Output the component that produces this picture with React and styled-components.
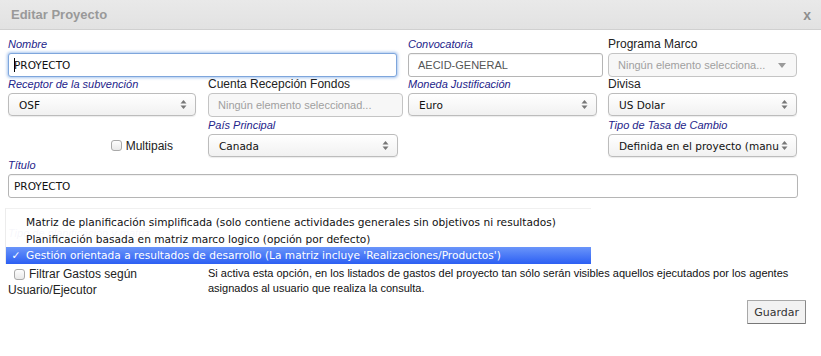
import React from 'react';
import styled, { createGlobalStyle } from 'styled-components';

const GlobalStyle = createGlobalStyle`
  html, body {
    margin: 0;
    padding: 0;
    background: #fff;
  }
  body {
    font-family: 'Liberation Sans', Arial, sans-serif;
    font-size: 12px;
    color: #222;
  }
`;

const Modal = styled.div`
  width: 821px;
  height: 356px;
  background: #fff;
  overflow: hidden;
`;

const Header = styled.div`
  height: 30px;
  display: flex;
  align-items: center;
  justify-content: space-between;
  padding: 0 10px 0 11px;
  box-sizing: border-box;
  background: linear-gradient(#e9e9e9, #e2e2e2);
  border-bottom: 1px solid #d0d0d0;
  h1 {
    margin: 0;
    font-size: 13px;
    font-weight: bold;
    color: #999;
  }
`;

const Close = styled.span`
  font-size: 14px;
  font-weight: bold;
  color: #8e8e8e;
`;

const Body = styled.div`
  padding: 7px 0 0 8px;
`;

const Grid = styled.div`
  display: grid;
  grid-template-columns: repeat(4, 190px);
  grid-template-rows: 40px 41px 40px 41px;
  column-gap: 10px;
`;

const Field = styled.div`
  display: flex;
  flex-direction: column;
  grid-column: ${(p) => p.span || 'auto'};
  position: relative;
`;

const Label = styled.label`
  display: block;
  height: 14px;
  line-height: 14px;
  margin-bottom: 2px;
  font-size: ${(p) => (p.required ? '11px' : '12px')};
  font-style: ${(p) => (p.required ? 'italic' : 'normal')};
  color: ${(p) => (p.required ? '#23238a' : '#222')};
  white-space: nowrap;
`;

const TextInput = styled.div`
  box-sizing: border-box;
  height: 24px;
  width: ${(p) => p.width || '100%'};
  display: flex;
  align-items: center;
  padding-left: 5px;
  border: 1px solid ${(p) => (p.focus ? '#7ea6dc' : '#b5b5b5')};
  border-radius: 3px;
  box-shadow: ${(p) =>
    p.focus ? '0 0 3px 1px rgba(96, 150, 222, 0.55)' : 'inset 0 1px 1px rgba(0,0,0,0.06)'};
  background: #fff;
  font-family: 'DejaVu Sans', Verdana, sans-serif;
  font-size: 10.5px;
  color: #111;
`;

const Caret = styled.span`
  display: inline-block;
  width: 1px;
  height: 14px;
  background: #000;
  margin-right: -1px;
`;

const PlainValue = styled.span`
  font-family: 'Liberation Sans', Arial, sans-serif;
  font-size: 11px;
  color: #555;
  padding-left: 4px;
`;

const Select = styled.div`
  box-sizing: border-box;
  height: 23px;
  width: ${(p) => p.width || '189px'};
  display: flex;
  align-items: center;
  justify-content: space-between;
  padding: 0 8px 0 10px;
  border: 1px solid #bcbcbc;
  border-radius: 4px;
  background: linear-gradient(#ffffff, #f1f1f1);
  box-shadow: 0 1px 1px rgba(0, 0, 0, 0.08);
  font-family: 'DejaVu Sans', Verdana, sans-serif;
  font-size: 10.5px;
  color: #111;
  white-space: nowrap;
  overflow: hidden;
`;

const Chosen = styled.div`
  box-sizing: border-box;
  height: 24px;
  width: ${(p) => p.width || '189px'};
  display: flex;
  align-items: center;
  justify-content: space-between;
  padding: 0 10px 0 9px;
  border: 1px solid #c4c4c4;
  border-radius: 4px;
  background: ${(p) => (p.disabled ? '#f7f7f7' : 'linear-gradient(#fff, #f4f4f4)')};
  font-size: 11px;
  color: #a0a0a0;
  white-space: nowrap;
`;

const DownArrow = styled.span`
  width: 0;
  height: 0;
  border-left: 4px solid transparent;
  border-right: 4px solid transparent;
  border-top: 5px solid #9a9a9a;
`;

const UpDown = () => (
  <svg width="7" height="11" viewBox="0 0 7 11">
    <path d="M3.5 1 L6.5 4.5 L0.5 4.5 Z" fill="#777" />
    <path d="M3.5 10 L6.5 6.5 L0.5 6.5 Z" fill="#777" />
  </svg>
);

const CheckRow = styled.div`
  display: flex;
  align-items: center;
  justify-content: ${(p) => p.justify || 'flex-start'};
  gap: 4px;
  height: ${(p) => p.height || 'auto'};
  padding: ${(p) => p.pad || '0'};
  font-size: 12px;
  color: #222;
`;

const Box = styled.span`
  box-sizing: border-box;
  width: 11px;
  height: 11px;
  border: 1px solid #a9a9a9;
  border-radius: 3px;
  background: linear-gradient(#fdfdfd, #e9e9e9);
`;

const Ghost = styled.div`
  height: 24px;
`;

const Menu = styled.div`
  position: absolute;
  left: -3px;
  top: -18px;
  width: 585px;
  padding-top: 5px;
  background: rgba(255, 255, 255, 0.96);
  border-top: 1px solid #f0f0f0;
  border-left: 1px solid #ececec;
  font-family: 'DejaVu Sans', Verdana, sans-serif;
  font-size: 10.6px;
  z-index: 2;
`;

const MenuItem = styled.div`
  height: 16.5px;
  line-height: 16.5px;
  display: flex;
  white-space: nowrap;
  color: ${(p) => (p.selected ? '#fff' : '#111')};
  background: ${(p) => (p.selected ? 'linear-gradient(#6a95fa, #2c5ff3)' : 'transparent')};
  span {
    width: 20px;
    text-align: center;
  }
`;

const Bottom = styled.div`
  display: grid;
  grid-template-columns: 190px 1fr;
  column-gap: 10px;
`;

const Filter = styled.div`
  line-height: 16px;
  font-size: 12px;
`;

const Help = styled.p`
  margin: 0;
  font-size: 11px;
  line-height: 15px;
  color: #111;
`;

const Footer = styled.div`
  display: flex;
  justify-content: flex-end;
  padding: 2px 15px 0 0;
`;

const Button = styled.button`
  height: 24px;
  padding: 0 6px;
  border: 1px solid #a8a8a8;
  border-bottom-color: #777;
  border-right-color: #888;
  border-radius: 1px;
  background: #f2f2f2;
  font-family: 'DejaVu Sans', Verdana, sans-serif;
  font-size: 11px;
  color: #333;
`;

const options = [
  'Matriz de planificación simplificada (solo contiene actividades generales sin objetivos ni resultados)',
  'Planificación basada en matriz marco logico (opción por defecto)',
  "Gestión orientada a resultados de desarrollo (La matriz incluye 'Realizaciones/Productos')",
];

export default function App() {
  return (
    <>
      <GlobalStyle />
      <Modal>
        <Header>
          <h1>Editar Proyecto</h1>
          <Close>x</Close>
        </Header>
        <Body>
          <Grid>
            <Field span="1 / 3">
              <Label required>Nombre</Label>
              <TextInput width="389px" focus>
                <Caret />
                PROYECTO
              </TextInput>
            </Field>
            <Field>
              <Label required>Convocatoria</Label>
              <TextInput width="195px">
                <PlainValue>AECID-GENERAL</PlainValue>
              </TextInput>
            </Field>
            <Field>
              <Label>Programa Marco</Label>
              <Chosen disabled>
                Ningún elemento selecciona...
                <DownArrow />
              </Chosen>
            </Field>

            <Field>
              <Label required>Receptor de la subvención</Label>
              <Select width="188px">
                OSF
                <UpDown />
              </Select>
            </Field>
            <Field>
              <Label>Cuenta Recepción Fondos</Label>
              <Chosen width="195px" disabled>
                Ningún elemento seleccionad...
              </Chosen>
            </Field>
            <Field>
              <Label required>Moneda Justificación</Label>
              <Select>
                Euro
                <UpDown />
              </Select>
            </Field>
            <Field>
              <Label>Divisa</Label>
              <Select>
                US Dolar
                <UpDown />
              </Select>
            </Field>

            <Field>
              <Label />
              <CheckRow justify="flex-end" height="23px" pad="0 25px 0 0">
                <Box />
                Multipais
              </CheckRow>
            </Field>
            <Field>
              <Label required>País Principal</Label>
              <Select width="190px">
                Canada
                <UpDown />
              </Select>
            </Field>
            <div />
            <Field>
              <Label required>Tipo de Tasa de Cambio</Label>
              <Select>
                Definida en el proyecto (manu
                <UpDown />
              </Select>
            </Field>

            <Field span="1 / 5">
              <Label required>Título</Label>
              <TextInput width="790px">PROYECTO</TextInput>
            </Field>

            <Field span="1 / 4" style={{ marginTop: '27px' }}>
              <Label required>Tipo de planificación y matriz</Label>
              <Ghost />
              <Menu>
                {options.map((o, i) => (
                  <MenuItem key={o} selected={i === 2}>
                    <span>{i === 2 ? '✓' : ''}</span>
                    {o}
                  </MenuItem>
                ))}
              </Menu>
            </Field>
          </Grid>

          <Bottom>
            <Filter>
              <CheckRow pad="0 0 0 6px">
                <Box />
                Filtrar Gastos según
              </CheckRow>
              Usuario/Ejecutor
            </Filter>
            <Help>
              Si activa esta opción, en los listados de gastos del proyecto tan sólo serán visibles
              aquellos ejecutados por los agentes asignados al usuario que realiza la consulta.
            </Help>
          </Bottom>

          <Footer>
            <Button>Guardar</Button>
          </Footer>
        </Body>
      </Modal>
    </>
  );
}
